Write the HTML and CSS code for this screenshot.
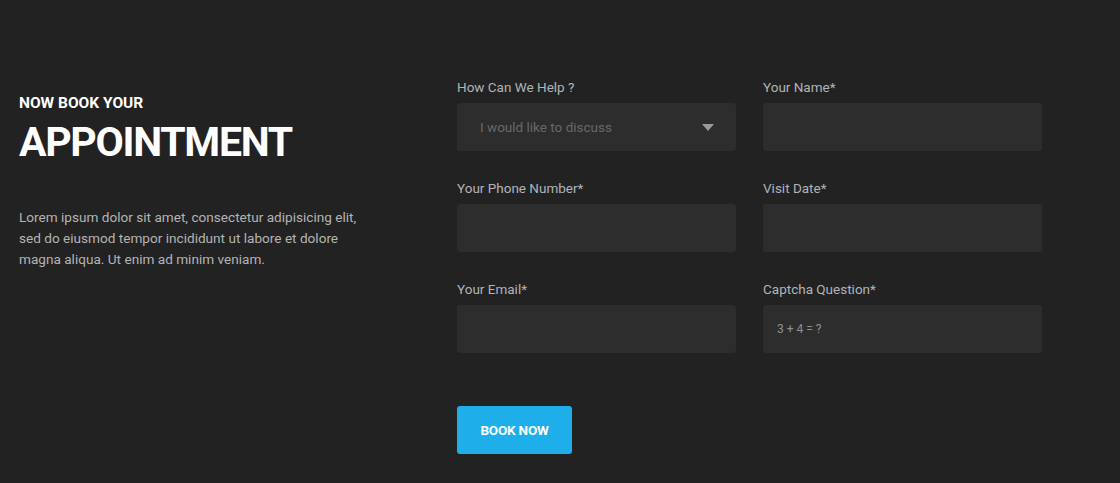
FILE: index.html
```html
<!DOCTYPE html>
<html>
<head>
<meta charset="utf-8">
<link rel="stylesheet" href="styles.css">
</head>
<body>
<section class="appointment">
  <div class="intro">
    <h3 class="kicker">NOW BOOK YOUR</h3>
    <h2 class="title">APPOINTMENT</h2>
    <p class="desc">Lorem ipsum dolor sit amet, consectetur adipisicing elit,<br>sed do eiusmod tempor incididunt ut labore et dolore<br>magna aliqua. Ut enim ad minim veniam.</p>
  </div>
  <form class="form">
    <div class="grid">
      <div class="field">
        <label class="label">How Can We Help ?</label>
        <div class="input select"><span class="placeholder">I would like to discuss</span><span class="caret"></span></div>
      </div>
      <div class="field">
        <label class="label">Your Name*</label>
        <div class="input"></div>
      </div>
      <div class="field">
        <label class="label">Your Phone Number*</label>
        <div class="input"></div>
      </div>
      <div class="field">
        <label class="label">Visit Date*</label>
        <div class="input"></div>
      </div>
      <div class="field">
        <label class="label">Your Email*</label>
        <div class="input"></div>
      </div>
      <div class="field">
        <label class="label">Captcha Question*</label>
        <div class="input captcha"><span>3 + 4 = ?</span></div>
      </div>
    </div>
    <button type="button" class="btn">BOOK NOW</button>
  </form>
</section>
</body>
</html>
```
FILE: styles.css
```css
html, body {
  margin: 0;
  padding: 0;
  background: #222222;
  height: 100%;
}
body {
  font-family: Roboto, "Liberation Sans", sans-serif;
}
.appointment {
  display: flex;
  padding: 77px 0 0 19px;
}
.intro {
  width: 438px;
  flex: none;
}
.kicker {
  margin: 17px 0 0;
  font-size: 15.5px;
  line-height: 18px;
  font-weight: 700;
  color: #ffffff;
  letter-spacing: 0;
}
.title {
  margin: 6px 0 0;
  font-size: 41px;
  line-height: 48px;
  font-weight: 700;
  color: #ffffff;
  letter-spacing: -1.3px;
}
.desc {
  margin: 41px 0 0;
  font-size: 13.6px;
  line-height: 21px;
  color: #b4b4b4;
  letter-spacing: 0;
}
.form {
  margin: 0;
}
.grid {
  display: grid;
  grid-template-columns: 279px 279px;
  column-gap: 27px;
  row-gap: 27px;
}
.field {
  display: flex;
  flex-direction: column;
  gap: 6px;
}
.label {
  font-size: 13.5px;
  line-height: 20px;
  color: #b0b4b8;
}
.input {
  height: 48px;
  background: #2d2d2d;
  border-radius: 3px;
  box-sizing: border-box;
  display: flex;
  align-items: center;
}
.select {
  padding: 0 22px 0 23px;
  justify-content: space-between;
}
.placeholder {
  font-size: 13.5px;
  color: #686868;
}
.caret {
  width: 0;
  height: 0;
  border-left: 6px solid transparent;
  border-right: 6px solid transparent;
  border-top: 7px solid #9a9a9a;
}
.captcha {
  padding-left: 14px;
  font-size: 12px;
  color: #909090;
}
.btn {
  margin-top: 53px;
  width: 115px;
  height: 48px;
  border: 0;
  border-radius: 3px;
  background: #1eaeea;
  color: #ffffff;
  font-family: Roboto, "Liberation Sans", sans-serif;
  font-weight: 700;
  font-size: 13.5px;
  letter-spacing: -0.2px;
  padding: 0;
}
```
